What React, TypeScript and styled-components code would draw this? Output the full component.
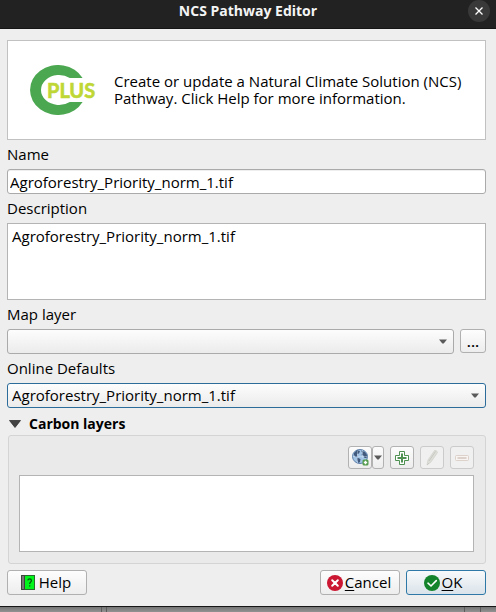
import React, { useState } from "react";
import styled, { createGlobalStyle, css } from "styled-components";

const GlobalStyle = createGlobalStyle`
  *, *::before, *::after { box-sizing: border-box; }
  body {
    margin: 0;
    background: #8f8f8f;
    color: #000;
    font-family: "Open Sans", "Noto Sans", sans-serif;
    font-size: 15px;
    line-height: 17px;
  }
  button, input, select, textarea { font: inherit; color: inherit; }
`;

const Screen = styled.div`
  min-height: 100vh;
  display: flex;
  flex-direction: column;
`;

const Dialog = styled.main`
  background: #eeeeee;
  border-bottom: 1px solid #161616;
`;

const TitleBar = styled.header`
  display: grid;
  grid-template-columns: 28px 1fr 28px;
  height: 29px;
  background: #222222;
  border-bottom: 1px solid #151515;
  color: #f4f4f4;
`;

const Title = styled.h1`
  grid-column: 2;
  margin: 0;
  font-size: 14px;
  line-height: 22px;
  font-weight: 700;
  text-align: center;
`;

const CloseButton = styled.button`
  display: grid;
  place-items: center;
  width: 22px;
  height: 22px;
  padding: 0;
  border: 0;
  border-radius: 50%;
  background: #393939;
`;

const Form = styled.form`
  display: flex;
  flex-direction: column;
  padding: 11px 10px 11px 7px;
`;

const Banner = styled.section`
  display: flex;
  align-items: center;
  gap: 18px;
  height: 100px;
  padding: 0 22px;
  background: #fff;
  border: 1px solid #c1c1c1;
`;

const BannerText = styled.p`
  margin: 0;
`;

const LogoSvg = styled.svg`
  flex: none;
`;

const LogoText = styled.text`
  font: 700 20px Lato, sans-serif;
`;

const Label = styled.label`
  height: 29px;
  line-height: 29px;
`;

const TextInput = styled.input`
  width: 100%;
  height: 25px;
  padding: 0 2px;
  border: 1px solid #aaaaaa;
  border-radius: 3px;
  background: #fff;
  box-shadow: inset 0 1px 0 #eeeeee;
`;

const boxed = css`
  display: block;
  width: 100%;
  height: 77px;
  background: #fff;
  border: 1px solid #b4b4b4;
`;

const TextArea = styled.textarea`
  ${boxed}
  padding: 3px 4px;
  line-height: 18px;
  resize: none;
`;

const LayerList = styled.ul`
  ${boxed}
  margin: 0;
  padding: 0;
  list-style: none;
`;

const Row = styled.div`
  display: flex;
  gap: 6px;
`;

const SelectFrame = styled.div`
  flex: 1;
  display: grid;
  align-items: center;
  > * { grid-area: 1 / 1; }
  > svg { justify-self: end; margin-right: 7px; pointer-events: none; }
`;

const Select = styled.select<{ $active?: boolean }>`
  appearance: none;
  width: 100%;
  height: 25px;
  padding: 0 24px 0 4px;
  border: 1px solid ${(p) => (p.$active ? "#2b6c9b" : "#aaaaaa")};
  border-radius: 3px;
  background: linear-gradient(#fdfdfd, #ebebeb);
  line-height: 23px;
  outline: none;
`;

const Button = styled.button<{ $primary?: boolean }>`
  display: flex;
  align-items: center;
  justify-content: center;
  gap: 2px;
  width: 80px;
  height: 25px;
  padding: 0 ${(p) => (p.$primary ? "6px" : "2px")} 0 0;
  border: 1px solid ${(p) => (p.$primary ? "#2d78a6" : "#b0b0b0")};
  border-radius: 3px;
  background: ${(p) =>
    p.$primary ? "linear-gradient(#f8fafb, #dae3ea)" : "linear-gradient(#fdfdfd, #ededed)"};
  u { text-underline-offset: 2px; text-decoration-skip-ink: none; }
`;

const BrowseButton = styled(Button)`
  width: 26px;
  height: 24px;
  padding: 0;
  font-weight: 600;
`;

const SectionToggle = styled.button`
  display: flex;
  align-items: center;
  gap: 8px;
  height: 27px;
  padding: 4px 2px 0;
  border: 0;
  background: none;
  font-size: 14px;
  font-weight: 700;
  line-height: 23px;
`;

const Group = styled.section`
  display: flex;
  flex-direction: column;
  gap: 6px;
  margin-left: 1px;
  padding: 10px 11px 11px 10px;
  background: #eaeaea;
  border: 1px solid #d4d4d4;
  border-radius: 3px;
`;

const Toolbar = styled.div`
  display: flex;
  justify-content: flex-end;
  gap: 6px;
`;

const Split = styled.div`
  display: flex;
`;

const ToolButton = styled.button<{ $narrow?: boolean }>`
  display: grid;
  place-items: center;
  width: ${(p) => (p.$narrow ? "12px" : "24px")};
  height: 23px;
  padding: 0;
  border: 1px solid #b2b2b2;
  border-radius: 3px;
  background: linear-gradient(#fcfcfc, #ededed);
  &:disabled { border-color: #cbcbcb; background: #f0f0f0; }
`;

const Footer = styled.footer`
  display: flex;
  gap: 6px;
  margin-top: 6px;
  > :first-child { margin-right: auto; gap: 4px; }
`;

const Backdrop = styled.div`
  flex: 1;
  display: grid;
  grid-template-columns: 102px 5px 1fr 16px 15px;
  background: linear-gradient(#747474, #929292);
  > * { border-right: 1px solid #5c5c5c; }
  > :last-child { border: 0; }
`;

function PlusLogo() {
  return (
    <LogoSvg width="66" height="50" viewBox="0 0 66 50" role="img" aria-label="CPLUS">
      <path d="M52.6 13A28 25 0 1 0 52.6 37H39.8A18 15 0 1 1 39.8 13Z" fill="#4ba750" />
      <LogoText x="17" y="33" fill="#bfd735" stroke="#bfd735" strokeWidth="0.6">PLUS</LogoText>
    </LogoSvg>
  );
}

function Arrow() {
  return (
    <svg width="8" height="5" viewBox="0 0 8 5" aria-hidden="true">
      <path d="M0 .5H8L4.7 4.5H3.3Z" fill="#5a5a5a" />
    </svg>
  );
}

function GlobeIcon() {
  return (
    <svg width="17" height="17" viewBox="0 0 17 17" aria-hidden="true">
      <ellipse cx="8" cy="7.5" rx="7.5" ry="7" fill="#a4c4e6" stroke="#5d7fa8" />
      <path d="M2 4L5 1.3 8 2 7 4.5 5 5 5.5 8 3.5 8 2 6ZM9 1.5L13 3 15 6 14.5 9 12.5 9 11.5 6.5 9.5 6 10.5 4ZM5 8.5L8.5 10 8 13 6.5 14 5 11Z" fill="#40597c" />
      <path d="M5.5 2V14M10.5 1V9M1 7.5H15" stroke="#e0eefb" strokeWidth=".6" opacity=".6" />
      <rect x="10.5" y="10.5" width="6" height="6" rx="1.5" fill="#539b4c" />
      <path d="M13.5 11.8V15.2M11.8 13.5H15.2" stroke="#fff" strokeWidth="1.4" />
    </svg>
  );
}

function AddIcon() {
  return (
    <svg width="16" height="16" viewBox="0 0 16 16" aria-hidden="true">
      <path d="M5.5 1.5H10.5V5.5H14.5V10.5H10.5V14.5H5.5V10.5H1.5V5.5H5.5Z" fill="#fff" stroke="#4f9152" />
      <path d="M8 3.5V12.5M3.5 8H12.5" stroke="#4f9152" strokeWidth="2" />
    </svg>
  );
}

function PencilIcon() {
  return (
    <svg width="16" height="18" viewBox="0 0 16 18" aria-hidden="true">
      <path d="M3 16L4 11 10.5 1.5Q13 1 13.5 3.5L7 13Z" fill="#deded8" stroke="#d0d0ca" strokeWidth=".7" />
      <path d="M5 12L11.5 2.5M3 16L5 14" stroke="#c9c9c4" />
    </svg>
  );
}

function RemoveIcon() {
  return (
    <svg width="16" height="16" viewBox="0 0 16 16" aria-hidden="true">
      <rect x="1.5" y="5.5" width="13" height="5" rx="1" fill="#f7f4f2" stroke="#dcd1cb" />
      <path d="M3.5 8H12.5" stroke="#dcd1cb" strokeWidth="2" />
    </svg>
  );
}

function HelpIcon() {
  return (
    <svg width="14" height="15" viewBox="0 0 14 15" aria-hidden="true">
      <rect x=".5" y=".5" width="13" height="14" fill="#00f61a" stroke="#286b2c" />
      <path d="M.5 .5H3.5V14.5H.5Z" fill="#777" stroke="#3c443c" />
      <path d="M6.8 5.3Q7 3.8 8.7 3.8T10.4 5.5Q10.4 6.6 9.4 7.3 8.7 7.9 8.7 9M8.7 10.3V11.6" fill="none" stroke="#064e0c" strokeWidth="1.2" />
    </svg>
  );
}

function StatusIcon({ ok }: { ok?: boolean }) {
  return (
    <svg width="16" height="16" viewBox="0 0 16 16" aria-hidden="true">
      <circle cx="8" cy="8" r="8" fill={ok ? "#14842c" : "#cb1731"} />
      <path
        d={ok ? "M4 8.2L7 11 12.3 5.6" : "M5.2 5.2L10.8 10.8M10.8 5.2L5.2 10.8"}
        fill="none"
        stroke="#fff"
        strokeWidth={ok ? 1.6 : 2}
        strokeLinecap="round"
      />
    </svg>
  );
}

const LAYER = "Agroforestry_Priority_norm_1.tif";

export default function App() {
  const [name, setName] = useState(LAYER);
  const [description, setDescription] = useState(LAYER);
  const [open, setOpen] = useState(true);

  return (
    <Screen>
      <GlobalStyle />
      <Dialog role="dialog" aria-labelledby="title">
        <TitleBar>
          <Title id="title">NCS Pathway Editor</Title>
          <CloseButton type="button" aria-label="Close">
            <svg width="8" height="8" viewBox="0 0 8 8" aria-hidden="true">
              <path d="M.5 .5L7.5 7.5M7.5 .5L.5 7.5" stroke="#fff" strokeWidth="1.3" />
            </svg>
          </CloseButton>
        </TitleBar>
        <Form onSubmit={(e) => e.preventDefault()}>
          <Banner>
            <PlusLogo />
            <BannerText>
              Create or update a Natural Climate Solution (NCS)
              <br />
              Pathway. Click Help for more information.
            </BannerText>
          </Banner>

          <Label htmlFor="name">Name</Label>
          <TextInput id="name" value={name} onChange={(e) => setName(e.target.value)} />

          <Label htmlFor="description">Description</Label>
          <TextArea
            id="description"
            spellCheck={false}
            value={description}
            onChange={(e) => setDescription(e.target.value)}
          />

          <Label htmlFor="map-layer">Map layer</Label>
          <Row>
            <SelectFrame>
              <Select id="map-layer">
                <option value="" aria-label="No layer" />
              </Select>
              <Arrow />
            </SelectFrame>
            <BrowseButton type="button" aria-label="Browse for a map layer">...</BrowseButton>
          </Row>

          <Label htmlFor="defaults">Online Defaults</Label>
          <SelectFrame>
            <Select id="defaults" $active>
              <option>{LAYER}</option>
            </Select>
            <Arrow />
          </SelectFrame>

          <SectionToggle type="button" aria-expanded={open} onClick={() => setOpen(!open)}>
            <svg width="12" height="8" viewBox="0 0 12 8" aria-hidden="true">
              <path d="M.5 .5H11.5L6 7.5Z" fill="#424242" stroke="#222" strokeWidth=".7" />
            </svg>
            Carbon layers
          </SectionToggle>
          {open && (
            <Group aria-label="Carbon layers">
              <Toolbar>
                <Split>
                  <ToolButton type="button" aria-label="Add default carbon layer"><GlobeIcon /></ToolButton>
                  <ToolButton type="button" $narrow aria-label="Choose default layer"><Arrow /></ToolButton>
                </Split>
                <ToolButton type="button" aria-label="Add layer"><AddIcon /></ToolButton>
                <ToolButton type="button" aria-label="Edit layer" disabled><PencilIcon /></ToolButton>
                <ToolButton type="button" aria-label="Remove layer" disabled><RemoveIcon /></ToolButton>
              </Toolbar>
              <LayerList aria-label="Carbon layers" />
            </Group>
          )}

          <Footer>
            <Button type="button"><HelpIcon />Help</Button>
            <Button type="button"><StatusIcon /><span><u>C</u>ancel</span></Button>
            <Button type="submit" $primary><StatusIcon ok /><span><u>O</u>K</span></Button>
          </Footer>
        </Form>
      </Dialog>
      <Backdrop aria-hidden="true">
        <span /><span /><span /><span /><span />
      </Backdrop>
    </Screen>
  );
}
